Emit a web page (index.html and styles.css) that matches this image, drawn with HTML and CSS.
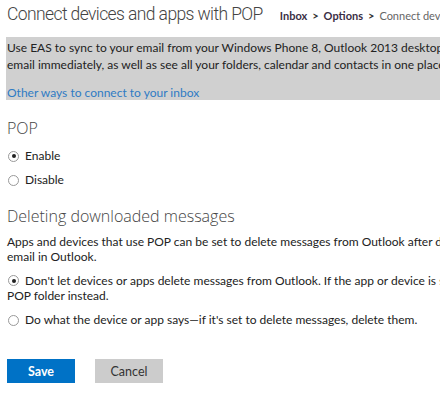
FILE: index.html
```html
<!DOCTYPE html>
<html>
<head>
<meta charset="utf-8">
<link rel="stylesheet" href="styles.css">
</head>
<body>
<div class="page">
  <div class="header">
    <h1 class="title">Connect devices and apps with POP</h1>
    <div class="crumbs"><span class="crumb">Inbox</span><span class="sep">&gt;</span><span class="crumb">Options</span><span class="sep">&gt;</span><span class="current">Connect devic</span></div>
  </div>
  <div class="notice">
    <p class="notice-text">Use EAS to sync to your email from your Windows Phone 8, Outlook 2013 desktop app, or other devices. You'll get new<br>email immediately, as well as see all your folders, calendar and contacts in one place.</p>
    <a class="notice-link" href="#">Other ways to connect to your inbox</a>
  </div>
  <h2 class="section-title pop-title">POP</h2>
  <div class="options">
    <label class="option"><span class="radio checked"></span>Enable</label>
    <label class="option"><span class="radio"></span>Disable</label>
  </div>
  <h2 class="section-title">Deleting downloaded messages</h2>
  <p class="desc">Apps and devices that use POP can be set to delete messages from Outlook after downloading. Choose whether to keep a copy of your<br>email in Outlook.</p>
  <div class="options wide">
    <div class="option long"><span class="radio checked"></span>Don't let devices or apps delete messages from Outlook. If the app or device is set to delete messages, move them to a special<br>POP folder instead.</div>
    <div class="option"><span class="radio"></span>Do what the device or app says—if it's set to delete messages, delete them.</div>
  </div>
  <div class="actions">
    <button class="btn primary">Save</button>
    <button class="btn secondary">Cancel</button>
  </div>
</div>
</body>
</html>
```
FILE: styles.css
```css
html, body {
  margin: 0;
  padding: 0;
  background: #fff;
  overflow: hidden;
}
body {
  font-family: Lato, "Open Sans", sans-serif;
  color: #333;
  font-size: 12px;
}
.page {
  width: 433px;
  padding: 0 0 0 7px;
  overflow: hidden;
}
.header {
  display: flex;
  align-items: baseline;
  gap: 17px;
  white-space: nowrap;
  height: 37px;
  padding-top: 4px;
  box-sizing: border-box;
  overflow: hidden;
}
.title {
  margin: 0;
  font-family: Roboto, "Open Sans", sans-serif;
  font-size: 17.5px;
  font-weight: 300;
  letter-spacing: -0.6px;
  color: #444;
  flex: none;
}
.crumbs {
  font-size: 11px;
  color: #666;
}
.crumb {
  font-weight: 700;
  color: #3a2e45;
}
.sep {
  font-weight: 700;
  color: #333;
  margin: 0 5px;
}
.notice {
  background: #d0d0d0;
  margin-left: -1px;
  padding: 2px 0 0 1px;
  height: 63px;
  box-sizing: border-box;
  width: 434px;
  overflow: hidden;
}
.notice-text {
  margin: 0;
  line-height: 17px;
  color: #222;
  white-space: nowrap;
}
.notice-link {
  display: block;
  margin-top: 12px;
  color: #2f7bc4;
  text-decoration: none;
}
.section-title {
  margin: 0;
  font-family: "Open Sans", sans-serif;
  font-weight: 300;
  font-size: 16px;
  line-height: 22px;
  color: #444;
}
.pop-title {
  margin-top: 17px;
}
.options {
  display: flex;
  flex-direction: column;
  gap: 8px;
  margin: 9px 0 17px;
}
.option {
  display: flex;
  align-items: center;
  gap: 6px;
  line-height: 16px;
  color: #222;
  white-space: nowrap;
}
.option.long {
  display: block;
  line-height: 15px;
}
.option.long .radio {
  display: inline-block;
  vertical-align: -1px;
  margin: 0 6px 0 1px;
}
.radio {
  width: 9px;
  height: 9px;
  border: 1px solid #999;
  border-radius: 50%;
  box-sizing: content-box;
  position: relative;
  flex: none;
  background: #fff;
  margin-left: 1px;
}
.radio.checked::after {
  content: "";
  position: absolute;
  left: 2.5px;
  top: 2.5px;
  width: 4px;
  height: 4px;
  border-radius: 50%;
  background: #222;
}
.desc {
  margin: 7px 0 0;
  line-height: 15px;
  color: #222;
  white-space: nowrap;
}
.wide {
  margin-top: 9px;
  gap: 9px;
}
.actions {
  display: flex;
  gap: 20px;
  margin-top: 31px;
}
.btn {
  font-family: inherit;
  font-size: 12.5px;
  border: none;
  height: 24px;
  width: 68px;
  padding: 0;
}
.primary {
  background: #0072c6;
  color: #fff;
  font-weight: 700;
}
.secondary {
  background: #cccccc;
  color: #333;
}
```
